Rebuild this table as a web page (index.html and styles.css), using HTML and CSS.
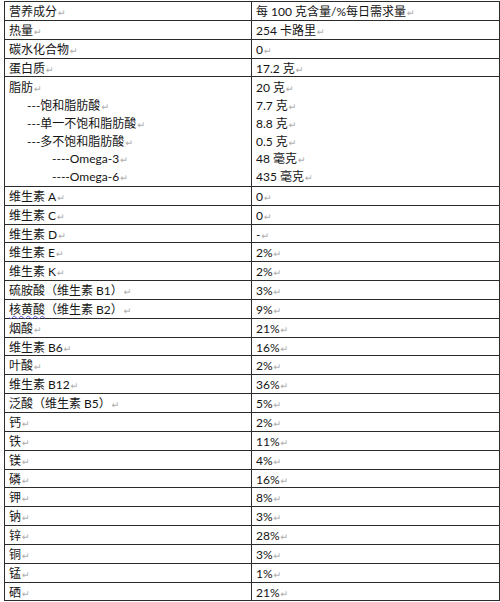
FILE: index.html
```html
<!DOCTYPE html>
<html lang="zh">
<head>
<meta charset="utf-8">
<title>营养成分</title>
<link rel="stylesheet" href="styles.css">
</head>
<body>
<table class="nutri">
  <colgroup><col class="c1"><col class="c2"></colgroup>
  <tr><td>营养成分<i class="ret">↵</i></td><td>每 100 克含量/%每日需求量<i class="ret">↵</i></td></tr>
  <tr><td>热量<i class="ret">↵</i></td><td>254 卡路里<i class="ret">↵</i></td></tr>
  <tr><td>碳水化合物<i class="ret">↵</i></td><td>0<i class="ret">↵</i></td></tr>
  <tr><td>蛋白质<i class="ret">↵</i></td><td>17.2 克<i class="ret">↵</i></td></tr>
  <tr class="fat">
    <td>
      <div class="ln">脂肪<i class="ret">↵</i></div>
      <div class="ln sub1">---饱和脂肪酸<i class="ret">↵</i></div>
      <div class="ln sub1">---单一不饱和脂肪酸<i class="ret">↵</i></div>
      <div class="ln sub1">---多不饱和脂肪酸<i class="ret">↵</i></div>
      <div class="ln sub2">----Omega-3<i class="ret">↵</i></div>
      <div class="ln sub2">----Omega-6<i class="ret">↵</i></div>
    </td>
    <td>
      <div class="ln">20 克<i class="ret">↵</i></div>
      <div class="ln">7.7 克<i class="ret">↵</i></div>
      <div class="ln">8.8 克<i class="ret">↵</i></div>
      <div class="ln">0.5 克<i class="ret">↵</i></div>
      <div class="ln">48 毫克<i class="ret">↵</i></div>
      <div class="ln">435 毫克<i class="ret">↵</i></div>
    </td>
  </tr>
  <tr><td>维生素 A<i class="ret">↵</i></td><td>0<i class="ret">↵</i></td></tr>
  <tr><td>维生素 C<i class="ret">↵</i></td><td>0<i class="ret">↵</i></td></tr>
  <tr><td>维生素 D<i class="ret">↵</i></td><td>-<i class="ret">↵</i></td></tr>
  <tr><td>维生素 E<i class="ret">↵</i></td><td>2%<i class="ret">↵</i></td></tr>
  <tr><td>维生素 K<i class="ret">↵</i></td><td>2%<i class="ret">↵</i></td></tr>
  <tr><td>硫胺酸（维生素 B1）<i class="ret">↵</i></td><td>3%<i class="ret">↵</i></td></tr>
  <tr><td><span class="spell">核黄酸</span>（维生素 B2）<i class="ret">↵</i></td><td>9%<i class="ret">↵</i></td></tr>
  <tr><td>烟酸<i class="ret">↵</i></td><td>21%<i class="ret">↵</i></td></tr>
  <tr><td>维生素 B6<i class="ret">↵</i></td><td>16%<i class="ret">↵</i></td></tr>
  <tr><td>叶酸<i class="ret">↵</i></td><td>2%<i class="ret">↵</i></td></tr>
  <tr><td>维生素 B12<i class="ret">↵</i></td><td>36%<i class="ret">↵</i></td></tr>
  <tr><td>泛酸（维生素 B5）<i class="ret">↵</i></td><td>5%<i class="ret">↵</i></td></tr>
  <tr><td>钙<i class="ret">↵</i></td><td>2%<i class="ret">↵</i></td></tr>
  <tr><td>铁<i class="ret">↵</i></td><td>11%<i class="ret">↵</i></td></tr>
  <tr><td>镁<i class="ret">↵</i></td><td>4%<i class="ret">↵</i></td></tr>
  <tr><td>磷<i class="ret">↵</i></td><td>16%<i class="ret">↵</i></td></tr>
  <tr><td>钾<i class="ret">↵</i></td><td>8%<i class="ret">↵</i></td></tr>
  <tr><td>钠<i class="ret">↵</i></td><td>3%<i class="ret">↵</i></td></tr>
  <tr><td>锌<i class="ret">↵</i></td><td>28%<i class="ret">↵</i></td></tr>
  <tr><td>铜<i class="ret">↵</i></td><td>3%<i class="ret">↵</i></td></tr>
  <tr><td>锰<i class="ret">↵</i></td><td>1%<i class="ret">↵</i></td></tr>
  <tr><td>硒<i class="ret">↵</i></td><td>21%<i class="ret">↵</i></td></tr>
</table>
</body>
</html>
```

FILE: styles.css
```css
html, body {
  margin: 0;
  padding: 0;
  background: #ffffff;
}

body {
  font-family: Lato, "Noto Sans CJK SC", sans-serif;
  font-size: 12px;
  color: #141414;
}

.nutri {
  border-collapse: collapse;
  table-layout: fixed;
  width: 495px;
  margin: 1px 0 0 4px;
}

.c1 { width: 247px; }
.c2 { width: 248px; }

.nutri td {
  border: 1px solid #2b2b2b;
  padding: 2px 4px 0 4px;
  line-height: 15.85px;
  vertical-align: top;
  white-space: nowrap;
}

.ln {
  height: 17.75px;
  line-height: 17.75px;
}

.sub1 { padding-left: 18px; }
.sub2 { padding-left: 43px; }

.ret {
  font-style: normal;
  font-family: "DejaVu Sans", sans-serif;
  font-size: 9.5px;
  line-height: 0;
  color: #b0b0b0;
  margin-left: 1px;
}

.spell {
  text-decoration-line: underline;
  text-decoration-style: wavy;
  text-decoration-color: #5c5cd6;
  text-decoration-thickness: 1px;
  text-underline-offset: 1px;
}
```
